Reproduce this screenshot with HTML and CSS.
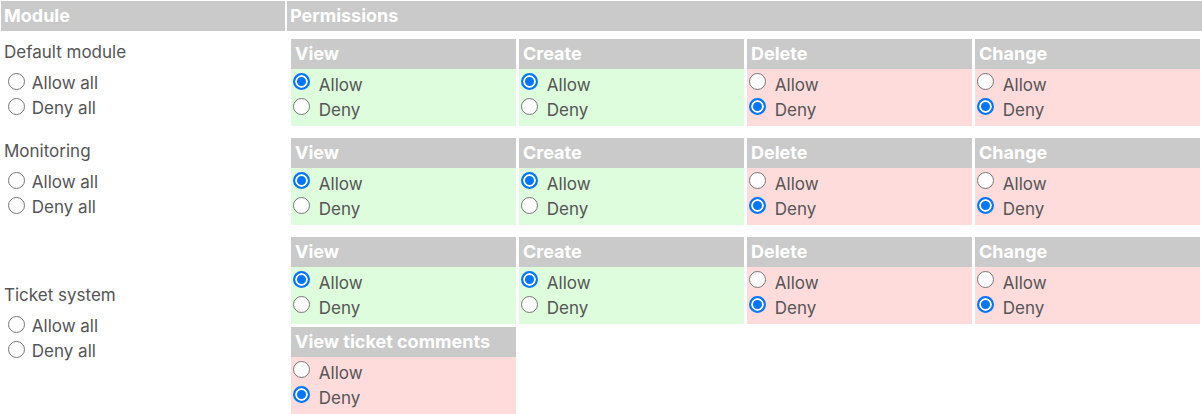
FILE: index.html
```html
<!DOCTYPE html>
<html lang="en">
<head>
    <meta charset="UTF-8">
    <meta name="viewport" content="width=device-width, initial-scale=1.0">
    <title>Permissions</title>
    <link rel="stylesheet" href="styles.css">
</head>
<body>
    <div class="perm-table">
        <div class="head-row">
            <div class="th">Module</div>
            <div class="th">Permissions</div>
        </div>

        <!-- Default module -->
        <div class="module-row">
            <div class="module-cell">
                <div class="module-name">Default module</div>
                <label class="all-opt"><input type="radio" name="m1-all"> Allow all</label>
                <label class="all-opt"><input type="radio" name="m1-all"> Deny all</label>
            </div>
            <div class="perm-grid">
                <div class="perm allowed">
                    <div class="perm-head">View</div>
                    <div class="perm-body">
                        <label><input type="radio" name="m1-view" checked> Allow</label>
                        <label><input type="radio" name="m1-view"> Deny</label>
                    </div>
                </div>
                <div class="perm allowed">
                    <div class="perm-head">Create</div>
                    <div class="perm-body">
                        <label><input type="radio" name="m1-create" checked> Allow</label>
                        <label><input type="radio" name="m1-create"> Deny</label>
                    </div>
                </div>
                <div class="perm denied">
                    <div class="perm-head">Delete</div>
                    <div class="perm-body">
                        <label><input type="radio" name="m1-delete"> Allow</label>
                        <label><input type="radio" name="m1-delete" checked> Deny</label>
                    </div>
                </div>
                <div class="perm denied">
                    <div class="perm-head">Change</div>
                    <div class="perm-body">
                        <label><input type="radio" name="m1-change"> Allow</label>
                        <label><input type="radio" name="m1-change" checked> Deny</label>
                    </div>
                </div>
            </div>
        </div>

        <!-- Monitoring -->
        <div class="module-row">
            <div class="module-cell">
                <div class="module-name">Monitoring</div>
                <label class="all-opt"><input type="radio" name="m2-all"> Allow all</label>
                <label class="all-opt"><input type="radio" name="m2-all"> Deny all</label>
            </div>
            <div class="perm-grid">
                <div class="perm allowed">
                    <div class="perm-head">View</div>
                    <div class="perm-body">
                        <label><input type="radio" name="m2-view" checked> Allow</label>
                        <label><input type="radio" name="m2-view"> Deny</label>
                    </div>
                </div>
                <div class="perm allowed">
                    <div class="perm-head">Create</div>
                    <div class="perm-body">
                        <label><input type="radio" name="m2-create" checked> Allow</label>
                        <label><input type="radio" name="m2-create"> Deny</label>
                    </div>
                </div>
                <div class="perm denied">
                    <div class="perm-head">Delete</div>
                    <div class="perm-body">
                        <label><input type="radio" name="m2-delete"> Allow</label>
                        <label><input type="radio" name="m2-delete" checked> Deny</label>
                    </div>
                </div>
                <div class="perm denied">
                    <div class="perm-head">Change</div>
                    <div class="perm-body">
                        <label><input type="radio" name="m2-change"> Allow</label>
                        <label><input type="radio" name="m2-change" checked> Deny</label>
                    </div>
                </div>
            </div>
        </div>

        <!-- Ticket system -->
        <div class="module-row">
            <div class="module-cell">
                <div class="module-name">Ticket system</div>
                <label class="all-opt"><input type="radio" name="m3-all"> Allow all</label>
                <label class="all-opt"><input type="radio" name="m3-all"> Deny all</label>
            </div>
            <div class="perm-grid">
                <div class="perm allowed">
                    <div class="perm-head">View</div>
                    <div class="perm-body">
                        <label><input type="radio" name="m3-view" checked> Allow</label>
                        <label><input type="radio" name="m3-view"> Deny</label>
                    </div>
                </div>
                <div class="perm allowed">
                    <div class="perm-head">Create</div>
                    <div class="perm-body">
                        <label><input type="radio" name="m3-create" checked> Allow</label>
                        <label><input type="radio" name="m3-create"> Deny</label>
                    </div>
                </div>
                <div class="perm denied">
                    <div class="perm-head">Delete</div>
                    <div class="perm-body">
                        <label><input type="radio" name="m3-delete"> Allow</label>
                        <label><input type="radio" name="m3-delete" checked> Deny</label>
                    </div>
                </div>
                <div class="perm denied">
                    <div class="perm-head">Change</div>
                    <div class="perm-body">
                        <label><input type="radio" name="m3-change"> Allow</label>
                        <label><input type="radio" name="m3-change" checked> Deny</label>
                    </div>
                </div>
                <div class="perm denied">
                    <div class="perm-head">View ticket comments</div>
                    <div class="perm-body">
                        <label><input type="radio" name="m3-comments"> Allow</label>
                        <label><input type="radio" name="m3-comments" checked> Deny</label>
                    </div>
                </div>
            </div>
        </div>
    </div>
</body>
</html>
```

FILE: styles.css
```css
body {
    font-family: 'Inter', 'Liberation Sans', sans-serif;
    font-size: 17px;
    color: #555;
    background: #fff;
    margin: 0;
    padding: 1px 0 0 1px;
}

.perm-table {
    display: flex;
    flex-direction: column;
    gap: 12px;
}

/* rows: module column + permissions column */
.head-row,
.module-row {
    display: grid;
    grid-template-columns: 284px 915px;
    column-gap: 2px;
}

.head-row {
    margin-bottom: -4px;
}

.th {
    background-color: #cacaca;
    color: #fff;
    font-weight: bold;
    font-size: 18px;
    height: 30px;
    line-height: 30px;
    padding-left: 3px;
}

/* radio buttons, drawn a bit larger than the browser default */
input[type="radio"] {
    -webkit-appearance: none;
    appearance: none;
    box-sizing: border-box;
    width: 17px;
    height: 17px;
    border: 1.5px solid #767676;
    border-radius: 50%;
    background: #fff;
}

input[type="radio"]:checked {
    border: 2px solid #0075ff;
    background: #0075ff;
    box-shadow: inset 0 0 0 2px #fff;
}

.module-cell {
    display: flex;
    flex-direction: column;
    justify-content: center;
    padding: 0 0 5px 3px;
}

.module-name {
    line-height: 25px;
    margin-bottom: 6px;
}

.all-opt {
    display: block;
    line-height: 25px;
}

.all-opt input {
    margin: 0 2px 0 4px;
    vertical-align: -1px;
}

/* permission cards */
.perm-grid {
    display: grid;
    grid-template-columns: repeat(4, 225px);
    gap: 3px;
    padding-left: 4px;
}

.perm-head {
    background-color: #cacaca;
    color: #fff;
    font-weight: bold;
    font-size: 18px;
    height: 30px;
    line-height: 30px;
    padding-left: 4px;
}

.perm-body {
    padding: 4px 0 3px;
}

.perm.allowed .perm-body {
    background-color: #ddfddd;
}

.perm.denied .perm-body {
    background-color: #ffdcdc;
}

.perm-body label {
    display: block;
    line-height: 25px;
}

.perm-body input {
    margin: 0 4px 0 2px;
    vertical-align: top;
}
```
